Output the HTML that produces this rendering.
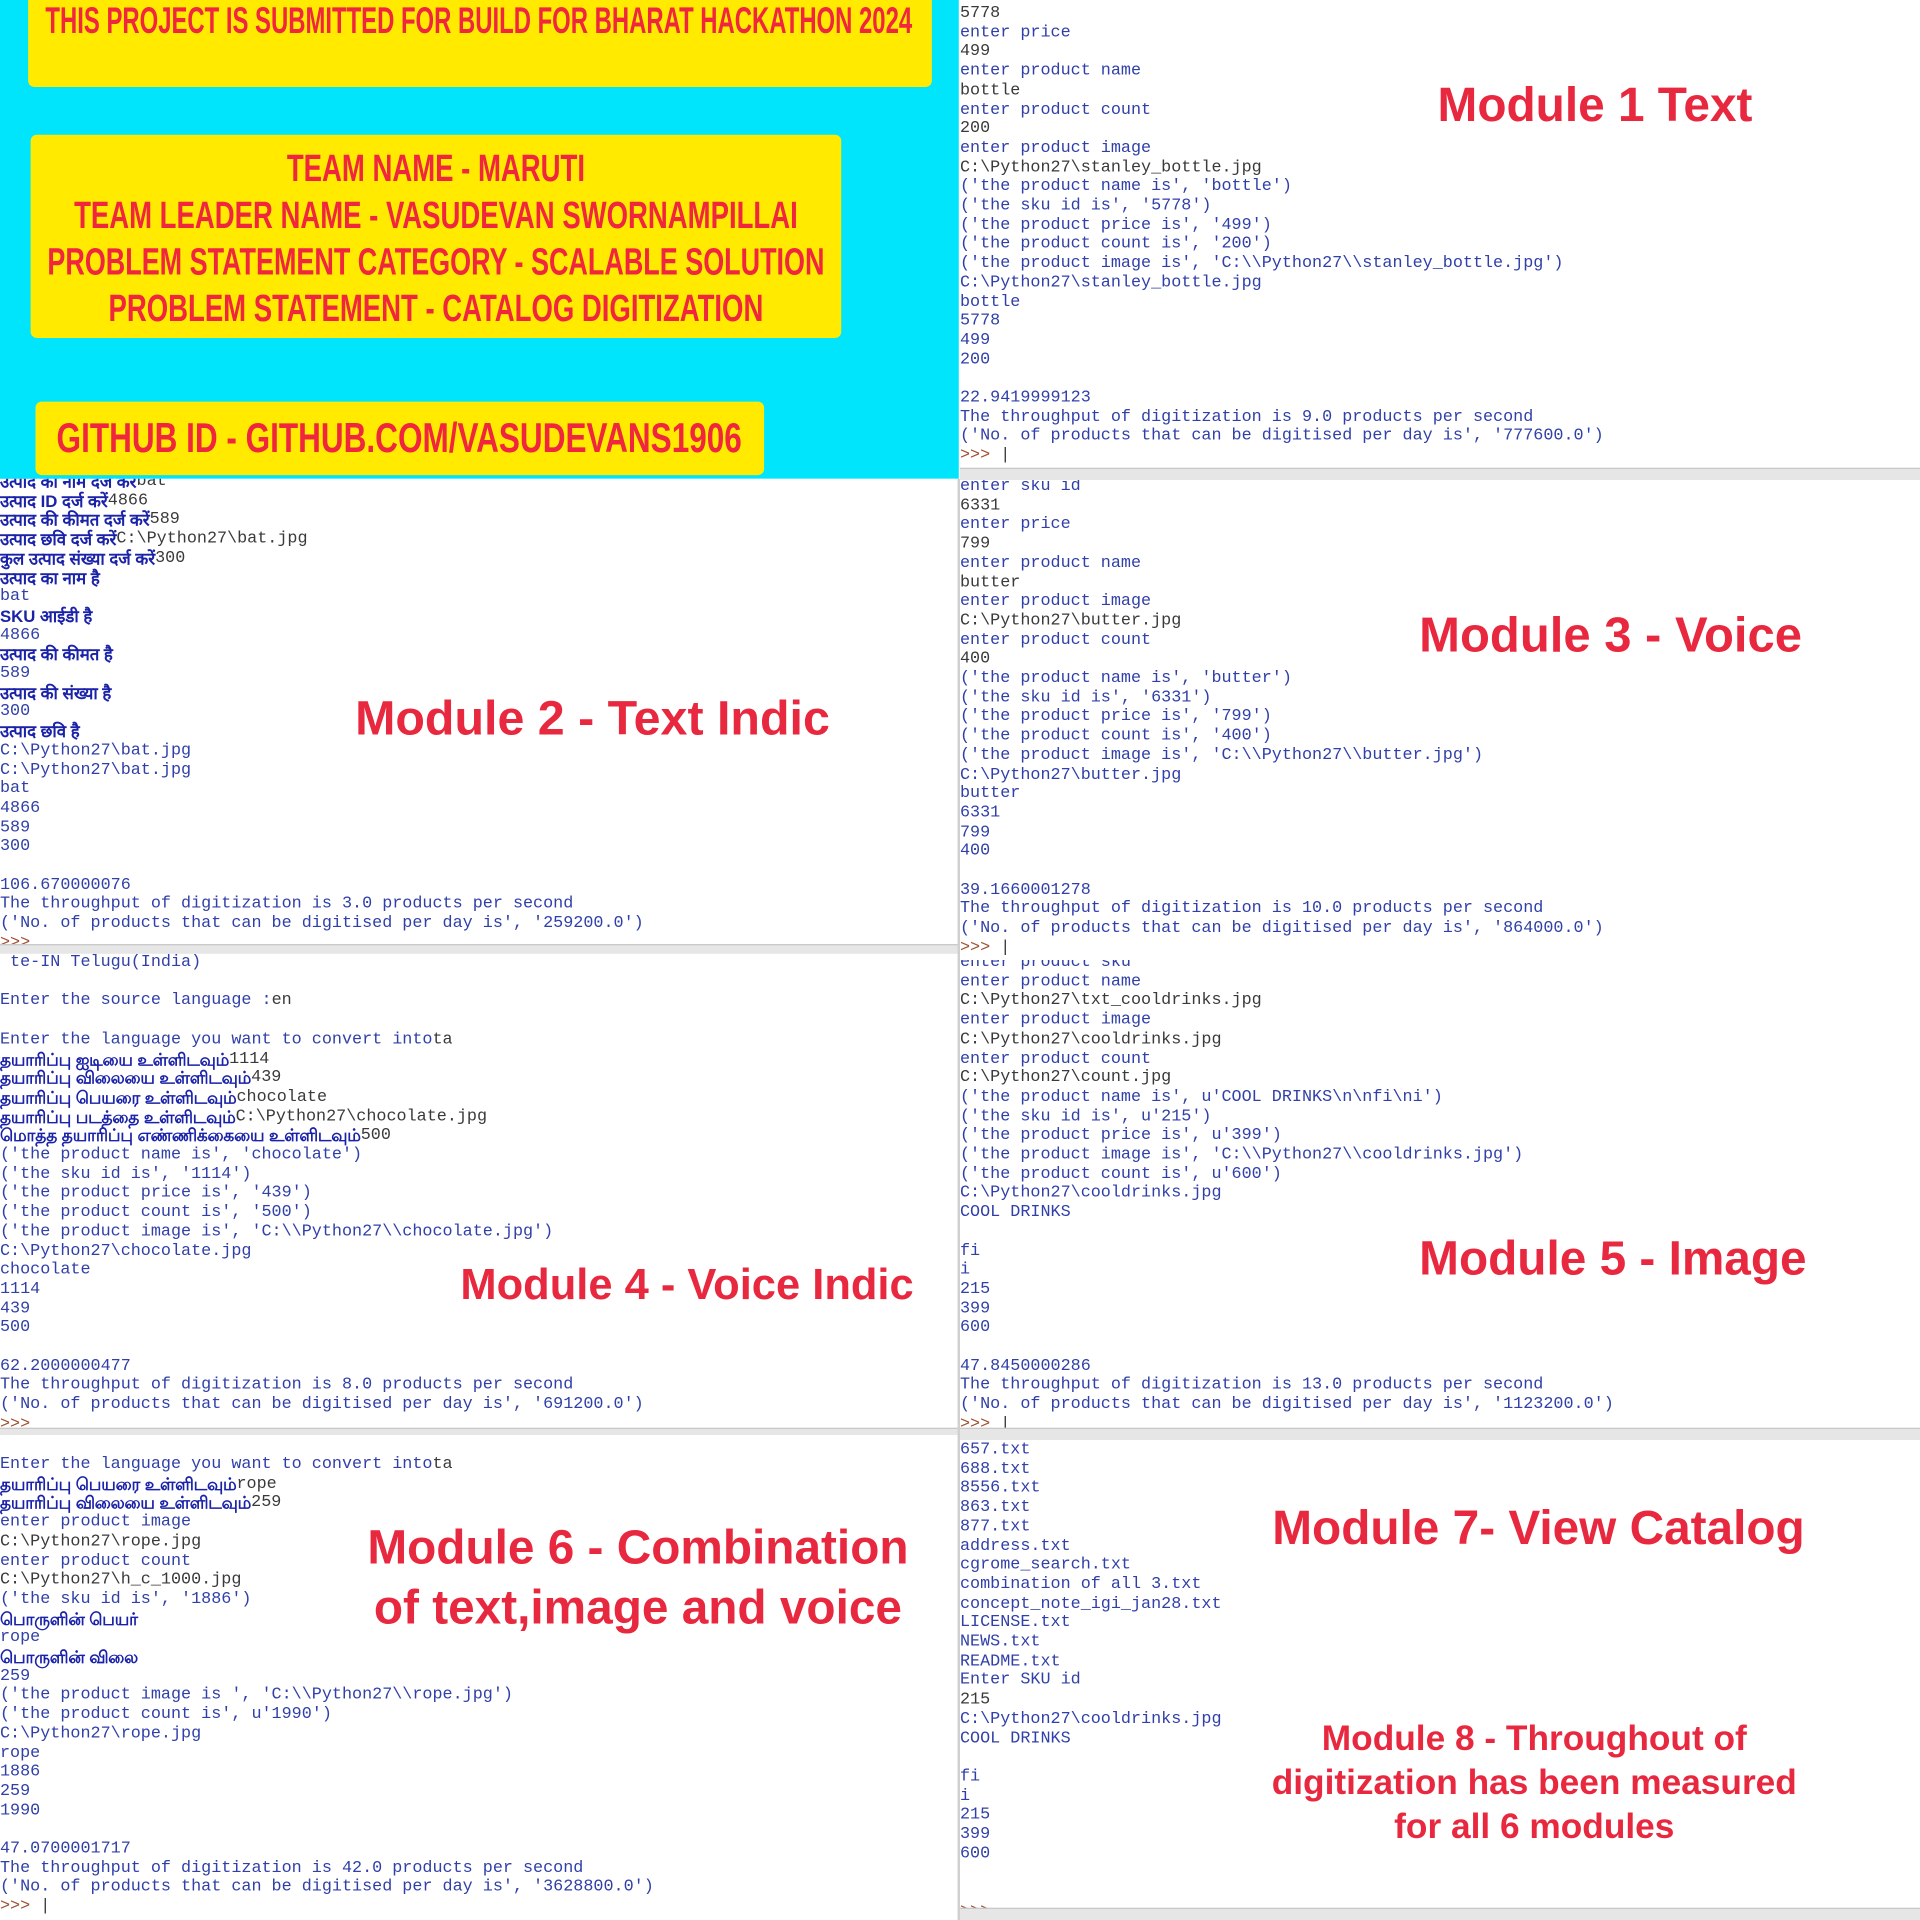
<!DOCTYPE html>
<html><head><meta charset="utf-8">
<style>
html,body{margin:0;padding:0;width:1920px;height:1920px;overflow:hidden;background:#fff}
#w{position:absolute;left:0;top:0;width:1568px;height:1568px;transform:scale(1.22449);transform-origin:0 0;background:#fff}
.p{position:absolute;overflow:hidden;background:#fff}
pre{position:absolute;left:0;margin:0;font-family:"Liberation Mono",monospace;font-size:13.7px;line-height:15.7px;color:#3040a8;white-space:pre}
.i{color:#3a3a3a}
.g{color:#a05030}
.t{font-family:"Liberation Sans","DejaVu Sans",sans-serif;font-weight:bold;color:#1a22a8;display:inline-block;height:15.7px;line-height:15.7px;vertical-align:top;overflow:visible}
.m{position:absolute;color:#e8283e;font-family:"Liberation Sans",sans-serif;font-weight:bold;font-size:39px;line-height:49px;text-align:center;white-space:nowrap}
.bar{position:absolute;left:0;right:0;height:9px;background:#e6e6e6;border-top:1px solid #c8c8c8;border-bottom:1px solid #d8d8d8}
.y{position:absolute;background:#ffea00;border-radius:5px}
.l{position:absolute;white-space:nowrap;color:#f0253e;font-family:"Liberation Sans Narrow","Liberation Sans",sans-serif;font-weight:bold;transform-origin:center center}
</style></head><body><div id="w">

<div class="p" style="left:0;top:0;width:783px;height:391px;background:#00e5fc">
 <div class="y" style="left:23px;top:-5px;width:738px;height:76px"></div>
 <div class="y" style="left:25px;top:110px;width:662px;height:166px"></div>
 <div class="y" style="left:29px;top:328px;width:595px;height:60px"></div>
 <div class="l" style="left:391px;top:1px;font-size:30px;line-height:34px;transform:translateX(-50%) scaleX(.65)">THIS PROJECT IS SUBMITTED FOR BUILD FOR BHARAT HACKATHON 2024</div>
 <div class="l" style="left:356px;top:120px;font-size:31px;line-height:36px;transform:translateX(-50%) scaleX(.725)">TEAM NAME - MARUTI</div>
 <div class="l" style="left:356px;top:158px;font-size:31px;line-height:36px;transform:translateX(-50%) scaleX(.725)">TEAM LEADER NAME - VASUDEVAN SWORNAMPILLAI</div>
 <div class="l" style="left:356px;top:196px;font-size:31px;line-height:36px;transform:translateX(-50%) scaleX(.71)">PROBLEM STATEMENT CATEGORY - SCALABLE SOLUTION</div>
 <div class="l" style="left:356px;top:234px;font-size:31px;line-height:36px;transform:translateX(-50%) scaleX(.725)">PROBLEM STATEMENT - CATALOG DIGITIZATION</div>
 <div class="l" style="left:326px;top:338px;font-size:34px;line-height:40px;transform:translateX(-50%) scaleX(.757)">GITHUB ID - GITHUB.COM/VASUDEVANS1906</div>
</div>

<div class="p" style="left:784px;top:0;width:784px;height:392px">
<pre style="top:4px"><span class="i">5778</span>
enter price
<span class="i">499</span>
enter product name
<span class="i">bottle</span>
enter product count
<span class="i">200</span>
enter product image
<span class="i">C:\Python27\stanley_bottle.jpg</span>
('the product name is', 'bottle')
('the sku id is', '5778')
('the product price is', '499')
('the product count is', '200')
('the product image is', 'C:\\Python27\\stanley_bottle.jpg')
C:\Python27\stanley_bottle.jpg
bottle
5778
499
200

22.9419999123
The throughput of digitization is 9.0 products per second
('No. of products that can be digitised per day is', '777600.0')
<span class="g">&gt;&gt;&gt;</span> <span class="i">|</span></pre>
 <div class="m" style="left:390px;top:62px">Module 1 Text</div>
 <div class="bar" style="top:382px"></div>
</div>

<div class="p" style="left:0;top:391px;width:783px;height:388px">
<pre style="top:-5px"><span class="t">उत्पाद का नाम दर्ज करें</span><span class="i">bat</span>
<span class="t">उत्पाद ID दर्ज करें</span><span class="i">4866</span>
<span class="t">उत्पाद की कीमत दर्ज करें</span><span class="i">589</span>
<span class="t">उत्पाद छवि दर्ज करें</span><span class="i">C:\Python27\bat.jpg</span>
<span class="t">कुल उत्पाद संख्या दर्ज करें</span><span class="i">300</span>
<span class="t">उत्पाद का नाम है</span>
bat
<span class="t">SKU आईडी है</span>
4866
<span class="t">उत्पाद की कीमत है</span>
589
<span class="t">उत्पाद की संख्या है</span>
300
<span class="t">उत्पाद छवि है</span>
C:\Python27\bat.jpg
C:\Python27\bat.jpg
bat
4866
589
300

106.670000076
The throughput of digitization is 3.0 products per second
('No. of products that can be digitised per day is', '259200.0')
<span class="g">&gt;&gt;&gt;</span></pre>
 <div class="m" style="left:290px;top:172px;font-size:39.5px">Module 2 - Text Indic</div>
 <div class="bar" style="top:380px"></div>
</div>

<div class="p" style="left:784px;top:392px;width:784px;height:392px">
<pre style="top:-2px">enter sku id
<span class="i">6331</span>
enter price
<span class="i">799</span>
enter product name
<span class="i">butter</span>
enter product image
<span class="i">C:\Python27\butter.jpg</span>
enter product count
<span class="i">400</span>
('the product name is', 'butter')
('the sku id is', '6331')
('the product price is', '799')
('the product count is', '400')
('the product image is', 'C:\\Python27\\butter.jpg')
C:\Python27\butter.jpg
butter
6331
799
400

39.1660001278
The throughput of digitization is 10.0 products per second
('No. of products that can be digitised per day is', '864000.0')
<span class="g">&gt;&gt;&gt;</span> <span class="i">|</span></pre>
 <div class="m" style="left:375px;top:103px;font-size:40px">Module 3 - Voice</div>
</div>

<div class="p" style="left:0;top:779px;width:783px;height:393px">
<pre style="top:0px"> te-IN Telugu(India)

Enter the source language :<span class="i">en</span>

Enter the language you want to convert into<span class="i">ta</span>
<span class="t">தயாரிப்பு ஐடியை உள்ளிடவும்</span><span class="i">1114</span>
<span class="t">தயாரிப்பு விலையை உள்ளிடவும்</span><span class="i">439</span>
<span class="t">தயாரிப்பு பெயரை உள்ளிடவும்</span><span class="i">chocolate</span>
<span class="t">தயாரிப்பு படத்தை உள்ளிடவும்</span><span class="i">C:\Python27\chocolate.jpg</span>
<span class="t">மொத்த தயாரிப்பு எண்ணிக்கையை உள்ளிடவும்</span><span class="i">500</span>
('the product name is', 'chocolate')
('the sku id is', '1114')
('the product price is', '439')
('the product count is', '500')
('the product image is', 'C:\\Python27\\chocolate.jpg')
C:\Python27\chocolate.jpg
chocolate
1114
439
500

62.2000000477
The throughput of digitization is 8.0 products per second
('No. of products that can be digitised per day is', '691200.0')
<span class="g">&gt;&gt;&gt;</span></pre>
 <div class="m" style="left:376px;top:246px;font-size:35.5px">Module 4 - Voice Indic</div>
 <div class="bar" style="top:387px"></div>
</div>

<div class="p" style="left:784px;top:784px;width:784px;height:392px">
<pre style="top:-5px">enter product sku
enter product name
<span class="i">C:\Python27\txt_cooldrinks.jpg</span>
enter product image
<span class="i">C:\Python27\cooldrinks.jpg</span>
enter product count
<span class="i">C:\Python27\count.jpg</span>
('the product name is', u'COOL DRINKS\n\nfi\ni')
('the sku id is', u'215')
('the product price is', u'399')
('the product image is', 'C:\\Python27\\cooldrinks.jpg')
('the product count is', u'600')
C:\Python27\cooldrinks.jpg
COOL DRINKS

fi
i
215
399
600

47.8450000286
The throughput of digitization is 13.0 products per second
('No. of products that can be digitised per day is', '1123200.0')
<span class="g">&gt;&gt;&gt;</span> <span class="i">|</span></pre>
 <div class="m" style="left:375px;top:220px">Module 5 - Image</div>
 <div class="bar" style="top:382px"></div>
</div>

<div class="p" style="left:0;top:1172px;width:783px;height:396px">
<pre style="top:17px">Enter the language you want to convert into<span class="i">ta</span>
<span class="t">தயாரிப்பு பெயரை உள்ளிடவும்</span><span class="i">rope</span>
<span class="t">தயாரிப்பு விலையை உள்ளிடவும்</span><span class="i">259</span>
enter product image
<span class="i">C:\Python27\rope.jpg</span>
enter product count
<span class="i">C:\Python27\h_c_1000.jpg</span>
('the sku id is', '1886')
<span class="t">பொருளின் பெயர்</span>
rope
<span class="t">பொருளின் விலை</span>
259
('the product image is ', 'C:\\Python27\\rope.jpg')
('the product count is', u'1990')
C:\Python27\rope.jpg
rope
1886
259
1990

47.0700001717
The throughput of digitization is 42.0 products per second
('No. of products that can be digitised per day is', '3628800.0')
<span class="g">&gt;&gt;&gt;</span> <span class="i">|</span></pre>
 <div class="m" style="left:300px;top:68px;font-size:39px;line-height:49px">Module 6 - Combination<br>of text,image and voice</div>
</div>

<div class="p" style="left:784px;top:1176px;width:784px;height:392px">
<pre style="top:1px">657.txt
688.txt
8556.txt
863.txt
877.txt
address.txt
cgrome_search.txt
combination of all 3.txt
concept_note_igi_jan28.txt
LICENSE.txt
NEWS.txt
README.txt
Enter SKU id
<span class="i">215</span>
C:\Python27\cooldrinks.jpg
COOL DRINKS

fi
i
215
399
600


<span class="g">&gt;&gt;&gt;</span></pre>
 <div class="m" style="left:255px;top:48px">Module 7- View Catalog</div>
 <div class="m" style="left:254px;top:226px;width:430px;font-size:28.8px;line-height:36px">Module 8 - Throughout of<br>digitization has been measured<br>for all 6 modules</div>
 <div class="bar" style="top:382px"></div>
</div>

<div style="position:absolute;left:782px;top:391px;width:2px;height:1177px;background:#d0d0d0"></div>
</div></body></html>
